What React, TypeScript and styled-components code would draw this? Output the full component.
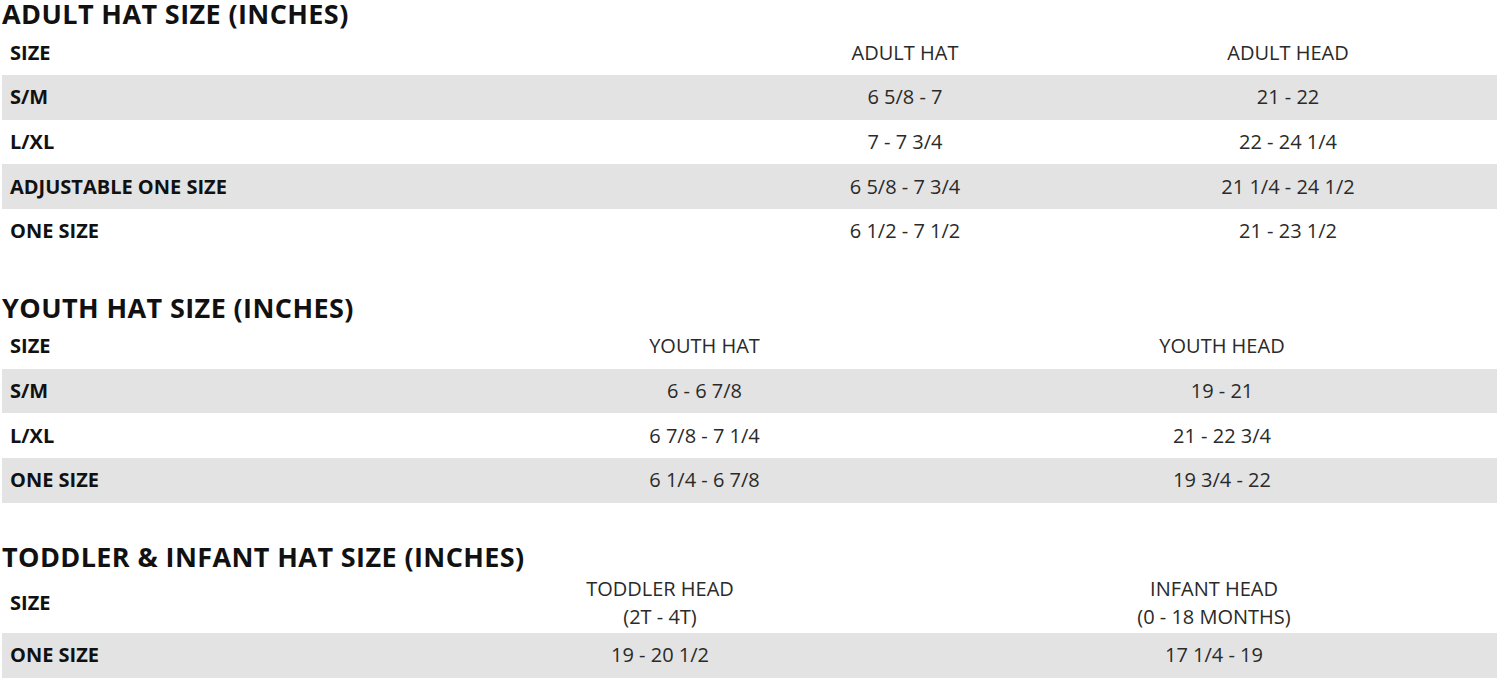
import React from 'react';
import styled, { createGlobalStyle } from 'styled-components';

const GlobalStyle = createGlobalStyle`
  html, body {
    margin: 0;
    padding: 0;
    background: #ffffff;
  }
  body {
    font-family: 'Open Sans', 'Noto Sans', 'Liberation Sans', sans-serif;
    color: #1a1a1a;
  }
`;

const Page = styled.main`
  box-sizing: border-box;
  width: 1500px;
  padding: 0 3px 0 2px;
`;

const Section = styled.section`
  margin-bottom: 40px;
  &:last-child {
    margin-bottom: 0;
  }
`;

const Title = styled.h2`
  margin: 0 0 3px;
  font-size: 27px;
  line-height: 27px;
  letter-spacing: 0.4px;
  font-weight: 700;
  color: #111111;
`;

const Row = styled.div<{ $cols: string; $shaded?: boolean; $head?: boolean }>`
  display: grid;
  grid-template-columns: ${(p) => p.$cols};
  align-items: center;
  min-height: ${(p) => (p.$head ? '45px' : '44.7px')};
  background: ${(p) => (p.$shaded ? '#e3e3e3' : 'transparent')};
`;

const Label = styled.div`
  padding: 2px 8px;
  font-size: 20px;
  line-height: 28px;
  font-weight: 700;
  color: #111111;
`;

const Value = styled.div`
  padding: 2px 8px;
  font-size: 20px;
  line-height: 28px;
  font-weight: 400;
  color: #2a2a2a;
  text-align: center;
`;

type Table = {
  title: string;
  cols: string;
  head: string[][];
  rows: string[][];
};

const tables: Table[] = [
  {
    title: 'ADULT HAT SIZE (INCHES)',
    cols: '729px 348px 418px',
    head: [['ADULT HAT'], ['ADULT HEAD']],
    rows: [
      ['S/M', '6 5/8 - 7', '21 - 22'],
      ['L/XL', '7 - 7 3/4', '22 - 24 1/4'],
      ['ADJUSTABLE ONE SIZE', '6 5/8 - 7 3/4', '21 1/4 - 24 1/2'],
      ['ONE SIZE', '6 1/2 - 7 1/2', '21 - 23 1/2'],
    ],
  },
  {
    title: 'YOUTH HAT SIZE (INCHES)',
    cols: '460px 485px 550px',
    head: [['YOUTH HAT'], ['YOUTH HEAD']],
    rows: [
      ['S/M', '6 - 6 7/8', '19 - 21'],
      ['L/XL', '6 7/8 - 7 1/4', '21 - 22 3/4'],
      ['ONE SIZE', '6 1/4 - 6 7/8', '19 3/4 - 22'],
    ],
  },
  {
    title: 'TODDLER & INFANT HAT SIZE (INCHES)',
    cols: '387px 542px 566px',
    head: [
      ['TODDLER HEAD', '(2T - 4T)'],
      ['INFANT HEAD', '(0 - 18 MONTHS)'],
    ],
    rows: [['ONE SIZE', '19 - 20 1/2', '17 1/4 - 19']],
  },
];

const SizeTable: React.FC<{ table: Table }> = ({ table }) => (
  <Section>
    <Title>{table.title}</Title>
    <Row $cols={table.cols} $head>
      <Label>SIZE</Label>
      {table.head.map((lines, i) => (
        <Value key={i}>
          {lines.map((l, j) => (
            <div key={j}>{l}</div>
          ))}
        </Value>
      ))}
    </Row>
    {table.rows.map((r, i) => (
      <Row key={r[0]} $cols={table.cols} $shaded={i % 2 === 0}>
        <Label>{r[0]}</Label>
        <Value>{r[1]}</Value>
        <Value>{r[2]}</Value>
      </Row>
    ))}
  </Section>
);

const App: React.FC = () => (
  <>
    <GlobalStyle />
    <Page>
      {tables.map((t) => (
        <SizeTable key={t.title} table={t} />
      ))}
    </Page>
  </>
);

export default App;
